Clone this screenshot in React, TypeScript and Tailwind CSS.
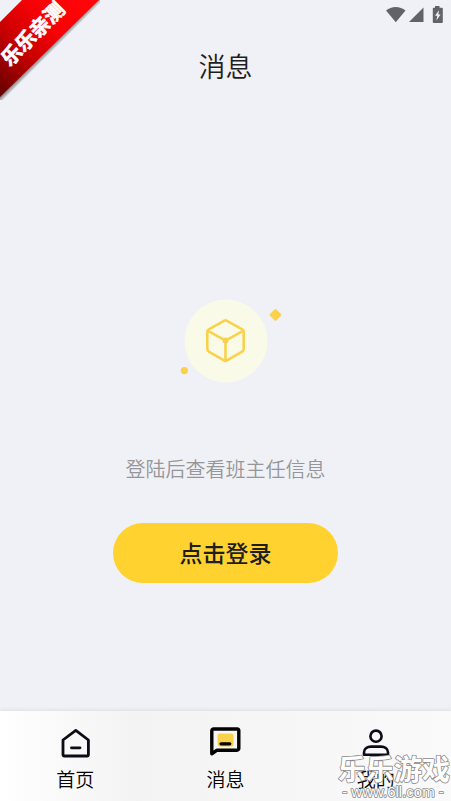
import type { ReactNode } from "react";

type Tab = {
  id: string;
  label: string;
  icon: ReactNode;
};

function HomeIcon() {
  return (
    <svg viewBox="0 0 32 32" className="h-8 w-8" fill="none" stroke="#0e0b18" strokeWidth="2.8" strokeLinejoin="round" strokeLinecap="round" aria-hidden="true">
      <path d="M4 13 16.8 3.4 29.4 13V27.8a1.2 1.2 0 0 1-1.2 1.2H5.2a1.2 1.2 0 0 1-1.2-1.2Z" />
      <path d="M12.4 20.8h8.6" />
    </svg>
  );
}

function MessageIcon() {
  return (
    <svg viewBox="0 0 32 32" className="h-8 w-8" fill="none" aria-hidden="true">
      <rect x="8.6" y="6.4" width="16" height="13" rx="2" fill="#f9d24b" />
      <path d="M2.8 26.8V3.8a1.8 1.8 0 0 1 1.8-1.8H28a1.8 1.8 0 0 1 1.8 1.8V21.4a1.8 1.8 0 0 1-1.8 1.8H8Z" stroke="#000" strokeWidth="3.4" strokeLinejoin="round" />
      <path d="M12 16.8h8.8" stroke="#000" strokeWidth="3.2" strokeLinecap="round" />
    </svg>
  );
}

function UserIcon() {
  return (
    <svg viewBox="0 0 32 32" className="h-8 w-8" fill="none" stroke="#0e0b18" strokeWidth="2.6" strokeLinejoin="round" aria-hidden="true">
      <circle cx="16" cy="9.2" r="5.6" />
      <path d="M4 27.8V25.4c0-4 3.4-5.8 7-5.8H21c3.6 0 7 1.8 7 5.8v2.4Z" />
    </svg>
  );
}

const TABS: Tab[] = [
  { id: "home", label: "首页", icon: <HomeIcon /> },
  { id: "message", label: "消息", icon: <MessageIcon /> },
  { id: "mine", label: "我的", icon: <UserIcon /> },
];

function StatusBar() {
  return (
    <div className="flex h-7 items-center justify-end px-2 pt-px" aria-hidden="true">
      <svg viewBox="0 0 57 17" className="h-[17px] w-[57px]" fill="#626366">
        <path d="M0 4.5C5.5 -.2 14 -.2 19.5 4.5L9.8 16.2Z" />
        <path d="M37.5 1.5V16H23Z" />
        <path d="M49 0h4.5v1.8H56a.8.8 0 0 1 .8.8V16.2a.8.8 0 0 1-.8.8H47.6a.8.8 0 0 1-.8-.8V2.6a.8.8 0 0 1 .8-.8H49Z" />
        <path d="M53 4.2 49 9.8h2.3L50.4 14.4 54.6 8.6H52.4Z" fill="#f0f1f6" />
      </svg>
    </div>
  );
}

function EmptyIllustration() {
  return (
    <svg viewBox="-8 0 120 84" className="h-[84px] w-[120px]" fill="none" aria-hidden="true">
      <circle cx="52" cy="42" r="41.5" fill="#fafae9" />
      <rect x="97" y="11.4" width="9" height="9" rx="1.2" transform="rotate(45 101.5 15.9)" fill="#fbd14b" />
      <circle cx="10.4" cy="71.6" r="3.6" fill="#fbd14b" />
      <g stroke="#f9d24b" strokeWidth="2.6" strokeLinejoin="round" strokeLinecap="round">
        <path d="M50 21.8 34.8 30.4a3 3 0 0 0-1.5 2.6V50a3 3 0 0 0 1.5 2.6L50 61.4a3 3 0 0 0 3 0L68.2 52.6a3 3 0 0 0 1.5-2.6V33a3 3 0 0 0-1.5-2.6L53 21.8a3 3 0 0 0-3 0Z" />
        <path d="M34 31.8 51.5 41.6 69 31.8M51.5 41.6V61.6" />
      </g>
      <circle cx="51.5" cy="41.6" r="3" fill="#f9d24b" />
    </svg>
  );
}

function Ribbon() {
  return (
    <svg viewBox="0 0 104 104" className="pointer-events-none absolute left-0 top-0 h-[104px] w-[104px]">
      <defs>
        <linearGradient id="ribbon" gradientUnits="userSpaceOnUse" x1="0" y1="90" x2="80" y2="10">
          <stop offset="0" stopColor="#6c0000" />
          <stop offset="0.4" stopColor="#c80000" />
          <stop offset="0.7" stopColor="#f40206" />
          <stop offset="1" stopColor="#ff0408" />
        </linearGradient>
        <linearGradient id="ribbonShadow" gradientUnits="userSpaceOnUse" x1="48" y1="48" x2="52" y2="52">
          <stop offset="0" stopColor="#000" stopOpacity="0.55" />
          <stop offset="1" stopColor="#000" stopOpacity="0" />
        </linearGradient>
      </defs>
      <path d="M0 92 92 0H100V3L3 100H0Z" fill="url(#ribbonShadow)" />
      <path d="M22 0H99L0 97V22Z" fill="url(#ribbon)" />
      <text
        x="33"
        y="41"
        textAnchor="middle"
        transform="rotate(-45 33 34)"
        fill="#fff"
        stroke="#fff"
        strokeWidth="0.7"
        className="font-['Noto_Sans_CJK_SC',sans-serif] text-[20px] font-bold"
      >
        乐乐亲测
      </text>
    </svg>
  );
}

function Watermark() {
  return (
    <svg viewBox="0 0 116 50" className="pointer-events-none absolute bottom-0 right-0 h-[50px] w-[116px]">
      <g fill="#fff" stroke="#8a8a8a" strokeWidth="1.6" strokeLinejoin="round" paintOrder="stroke" textAnchor="middle">
        <text x="59" y="29" className="font-['Noto_Sans_CJK_SC',sans-serif] text-[28px] font-bold">
          乐乐游戏
        </text>
        <text x="58" y="46" className="font-['Liberation_Sans',sans-serif] text-[15px]">
          - www.6ll.com -
        </text>
      </g>
    </svg>
  );
}

export default function App() {
  return (
    <div className="relative flex min-h-screen flex-col bg-[#f0f1f6] font-['Noto_Sans_CJK_SC',sans-serif] text-[#1e1e20]">
      <StatusBar />
      <header className="flex h-[76px] items-center justify-center">
        <h1 className="text-[27px] leading-10 font-[350]">消息</h1>
      </header>

      <main className="flex flex-1 flex-col items-center pt-[195px]">
        <EmptyIllustration />
        <p className="mt-[72px] text-[20px] leading-7 font-[350] text-[#969698]">登陆后查看班主任信息</p>
        <button
          type="button"
          className="mt-10 h-[60px] w-1/2 rounded-full bg-[#ffd22f] pb-0.5 text-[23px] font-medium"
        >
          点击登录
        </button>
      </main>

      <nav className="flex h-[90px] bg-linear-to-r from-white via-[#f3f3f3] via-30% to-[#fafafa] text-black shadow-[0_-1px_4px_rgba(0,0,0,0.08)]">
        {TABS.map((tab) => (
          <button key={tab.id} type="button" className="flex flex-1 flex-col items-center pt-4">
            {tab.icon}
            <span className="mt-2 text-[19px] leading-6 font-[350]">{tab.label}</span>
          </button>
        ))}
      </nav>

      <Ribbon />
      <Watermark />
    </div>
  );
}
